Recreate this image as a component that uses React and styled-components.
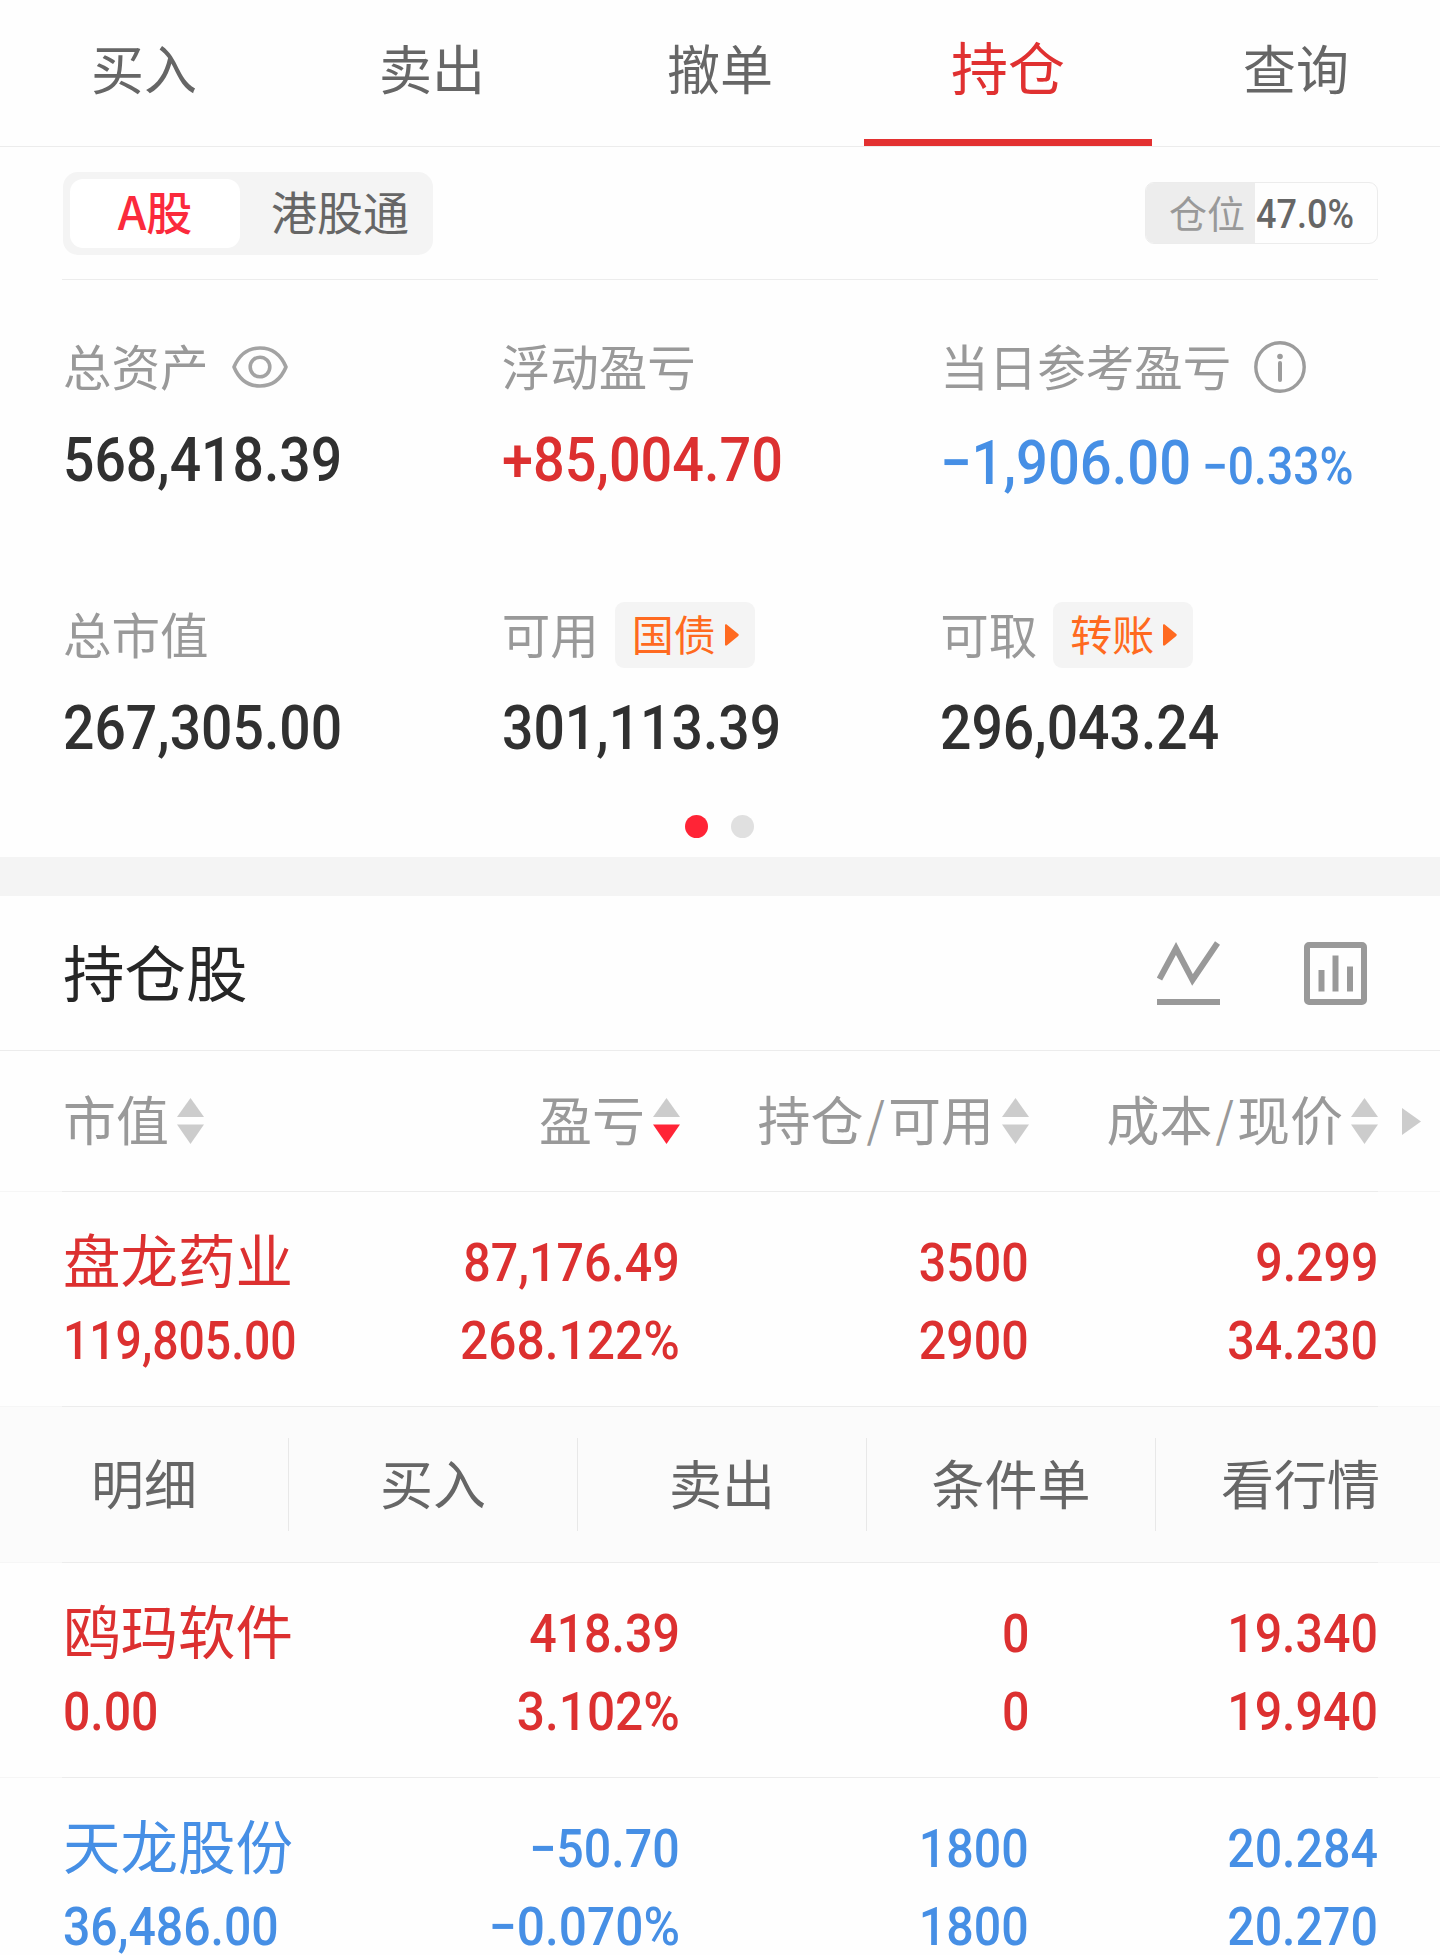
import React from "react";
import styled, {createGlobalStyle} from "styled-components";

const RED = "#dc3030";
const BLUE = "#468fe5";
const GREY = "#999999";

const GlobalStyle = createGlobalStyle`
  * {
    box-sizing: border-box;
  }

  body {
    margin: 0;
    background: #fefefe;
    font-family: "Noto Sans CJK SC", "Noto Sans", sans-serif;
  }
`

const Page = styled.div`
  width: 1440px;
  height: 1955px;
  overflow: hidden;
  display: flex;
  flex-direction: column;
`

// The digits use a narrow face, so Roboto is squeezed horizontally
const Num = styled.div`
  font-family: Roboto, "Noto Sans CJK SC", sans-serif;
  font-weight: 500;
  font-size: ${p => p.$size}px;
  line-height: ${p => p.$line}px;
  color: ${p => p.$color};
  width: max-content;
  white-space: nowrap;
  transform: scaleX(${p => p.$squeeze || 0.9});
  transform-origin: ${p => p.$right ? "right" : "left"} center;
`

const TabBar = styled.div`
  display: flex;
  height: 147px;
  flex-shrink: 0;
  border-bottom: 1px solid #ececec;
`

const Tab = styled.div`
  flex: 1;
  text-align: center;
  padding-top: ${p => p.$active ? 1 : 3}px;
  line-height: 128px;
  font-size: ${p => p.$active ? 57 : 53}px;
  color: ${p => p.$active ? "#e03131" : "#666666"};
  border-bottom: 7px solid ${p => p.$active ? "#e33131" : "transparent"};
`

const AccountBar = styled.div`
  display: flex;
  align-items: center;
  justify-content: space-between;
  height: 133px;
  flex-shrink: 0;
  margin: 0 62px;
  border-bottom: 1px solid #ececec;
`

const Segment = styled.div`
  display: flex;
  width: 370px;
  height: 83px;
  padding: 7px;
  margin-left: 1px;
  border-radius: 15px;
  background: #f4f4f4;
`

const SegmentItem = styled.div`
  width: ${p => p.$active ? 170 : 200}px;
  flex-shrink: 0;
  border-radius: 13px;
  text-align: center;
  font-size: 46px;
  line-height: 63px;
  font-weight: ${p => p.$active ? 500 : 400};
  color: ${p => p.$active ? "#fb2a3c" : "#666666"};
  background: ${p => p.$active ? "#ffffff" : "transparent"};
`

const Position = styled.div`
  display: flex;
  width: 233px;
  height: 62px;
  border: 1px solid #ececec;
  border-radius: 9px;
  overflow: hidden;
`

const PositionLabel = styled.div`
  width: 109px;
  padding-left: 23px;
  font-size: 38px;
  line-height: 57px;
  color: ${GREY};
  background: #ededed;
  margin-right: 1px;
`

const Summary = styled.div`
  display: flex;
  flex-direction: column;
  align-items: center;
  height: 577px;
  flex-shrink: 0;
  padding: 54px 62px 0;
`

const Stats = styled.div`
  display: grid;
  width: 100%;
  grid-template-columns: repeat(3, minmax(0, 1fr));
  row-gap: 102px;
`

const StatLabel = styled.div`
  display: flex;
  align-items: center;
  height: 66px;
  margin-bottom: 20px;
`

const LabelText = styled.span`
  height: 66px;
  line-height: 62px;
  font-size: 48.5px;
  white-space: nowrap;
  padding-left: 1px;
  color: ${GREY};
`

const StatValue = styled.div`
  height: 80px;
  padding-top: ${p => p.$drop || 0}px;
  padding-left: 1px;
`

const Percent = styled.span`
  font-size: 51px;
  margin-left: 12px;
`

const Tag = styled.div`
  display: flex;
  align-items: center;
  height: 66px;
  width: 140px;
  margin-left: 16px;
  padding-left: 17px;
  border-radius: 9px;
  background: #f4f4f4;
`

const TagText = styled.span`
  height: 66px;
  width: 93px;
  line-height: 62px;
  font-size: 42px;
  color: #ff6a20;
`

const Dots = styled.div`
  display: flex;
  gap: 23px;
  margin-top: 47px;
  margin-right: 1px;
`

const Dot = styled.div`
  width: 23px;
  height: 23px;
  border-radius: 50%;
  background: ${p => p.$active ? "#ff2436" : "#e0e0e0"};
`

const Band = styled.div`
  height: 39px;
  flex-shrink: 0;
  background: #f4f4f4;
`

const SectionHead = styled.div`
  display: flex;
  align-items: center;
  height: 155px;
  flex-shrink: 0;
  padding: 0 73px 0 63px;
  border-bottom: 1px solid #ececec;
`

const SectionTitle = styled.div`
  flex: 1;
  font-size: 61.5px;
  line-height: 90px;
  padding-bottom: 4px;
  color: #262626;
`

const HeadIcon = styled.svg`
  width: 63px;
  height: 64px;
  margin-left: 84px;
`

const Grid = styled.div`
  display: grid;
  grid-template-columns: 269px 349px 349px 349px 62px;
  padding-left: 62px;
  flex-shrink: 0;
`

const TableHead = styled(Grid)`
  height: 140px;
  align-items: center;
`

const HeadCell = styled.div`
  display: flex;
  align-items: center;
  justify-content: ${p => p.$left ? "flex-start" : "flex-end"};
  padding-left: ${p => p.$left ? 1 : 0}px;
  white-space: nowrap;
`

const HeadText = styled.span`
  font-size: 53px;
  line-height: 80px;
  padding-bottom: 6px;
  color: ${GREY};
`

const Slash = styled.span`
  font-size: 47px;
  line-height: 0;
  vertical-align: 4px;
  padding: 0 3px;
`

const ArrowCell = styled.div`
  padding-left: 24px;
  line-height: 0;
`

const Row = styled(Grid)`
  height: 214px;
  padding-top: 32px;
`

const Cell = styled.div`
  display: flex;
  flex-direction: column;
  align-items: ${p => p.$left ? "flex-start" : "flex-end"};
  padding-left: ${p => p.$left ? 1 : 0}px;
`

const StockName = styled.div`
  height: 78px;
  font-size: 57.5px;
  line-height: 68px;
  white-space: nowrap;
  color: ${p => p.$color};
`

// Slightly lighter at both page margins
const Line = styled.div`
  height: 1px;
  flex-shrink: 0;
  background: linear-gradient(#ececec, #ececec) 62px 0 / 1316px 1px no-repeat, #f6f6f6;
`

const Actions = styled.div`
  display: flex;
  align-items: center;
  height: 155px;
  flex-shrink: 0;
  background: #fbfbfb;
`

const Action = styled.div`
  width: 289px;
  height: 93px;
  flex-shrink: 0;
  text-align: center;
  font-size: 53px;
  line-height: 89px;
  color: #666666;
  border-right: 1px solid #e8e8e8;

  &:last-child {
    border-right: none;
  }
`

const LabelIcon = styled.svg`
  flex-shrink: 0;
  margin-left: 23px;
`

const SortArrows = styled.svg`
  flex-shrink: 0;
  margin-left: 8px;
`

const EyeIcon = () => (
    <LabelIcon width="56" height="42" viewBox="0 0 56 42" fill="none" stroke="#a3a3a3" strokeWidth="3.6">
        <path d="M2 21C7 9 16 2 28 2s21 7 26 19c-5 12-14 19-26 19S7 33 2 21z" strokeLinejoin="round"/>
        <circle cx="28" cy="21" r="9.8"/>
    </LabelIcon>
)

const InfoIcon = () => (
    <LabelIcon width="52" height="52" viewBox="0 0 52 52" fill="none" stroke="#9c9c9c">
        <circle cx="26" cy="26" r="24.2" strokeWidth="3.4"/>
        <path d="M26 22v17" strokeWidth="4" strokeLinecap="round"/>
        <circle cx="26" cy="15.5" r="2.8" fill="#9c9c9c" stroke="none"/>
    </LabelIcon>
)

const TagArrow = () => (
    <svg width="14" height="22" viewBox="0 0 14 22" fill="#ff6a20">
        <path d="M0 1.5C0 .3 1 0 2 .8L13 9.8c1 .8 1 1.6 0 2.4L2 21.2C1 22 0 21.7 0 20.5z"/>
    </svg>
)

const SortIcon = ({active}) => (
    <SortArrows width="27" height="46" viewBox="0 0 27 46">
        <path d="M13.5 0L27 19H0z" fill="#cccccc"/>
        <path d="M13.5 46L27 26.500H0z" fill={active ? "#ff2436" : "#cccccc"}/>
    </SortArrows>
)

const tabs = ["买入", "卖出", "撤单", "持仓", "查询"];
const actions = ["明细", "买入", "卖出", "条件单", "看行情"];

const holdings = [
    {
        name: "盘龙药业", value: "119,805.00", color: RED, open: true, squeeze: 0.865,
        cols: [["87,176.49", "268.122%"], ["3500", "2900"], ["9.299", "34.230"]]
    },
    {
        name: "鸥玛软件", value: "0.00", color: RED,
        cols: [["418.39", "3.102%"], ["0", "0"], ["19.340", "19.940"]]
    },
    {
        name: "天龙股份", value: "36,486.00", color: BLUE,
        cols: [["−50.70", "−0.070%"], ["1800", "1800"], ["20.284", "20.270"]]
    }
];

const Stat = ({label, extra, drop, squeeze = 0.892, color = "#303030", children}) => (
    <div>
        <StatLabel>
            <LabelText>{label}</LabelText>
            {extra}
        </StatLabel>
        <StatValue $drop={drop}>
            <Num $size={62} $line={80} $squeeze={squeeze} $color={color}>{children}</Num>
        </StatValue>
    </div>
)

const Holding = ({stock}) => (
    <>
        <Row>
            <Cell $left>
                <StockName $color={stock.color}>{stock.name}</StockName>
                <Num $size={53.5} $line={78} $squeeze={stock.squeeze} $color={stock.color}>{stock.value}</Num>
            </Cell>
            {stock.cols.map((col, i) => (
                <Cell key={i}>
                    {col.map((text, j) => (
                        <Num
                            key={j}
                            $right
                            $size={53.5}
                            $line={78}
                            $squeeze={text.endsWith("%") ? 0.928 : 0.903}
                            $color={stock.color}
                        >
                            {text}
                        </Num>
                    ))}
                </Cell>
            ))}
        </Row>
        <Line/>
        {stock.open && (
            <>
                <Actions>
                    {actions.map(name => <Action key={name}>{name}</Action>)}
                </Actions>
                <Line/>
            </>
        )}
    </>
)

const App = () => {
    const [tab, setTab] = React.useState("持仓");

    return (
        <Page>
            <GlobalStyle/>
            <TabBar>
                {tabs.map(name => (
                    <Tab key={name} $active={name === tab} onClick={() => setTab(name)}>{name}</Tab>
                ))}
            </TabBar>

            <AccountBar>
                <Segment>
                    <SegmentItem $active>A股</SegmentItem>
                    <SegmentItem>港股通</SegmentItem>
                </Segment>
                <Position>
                    <PositionLabel>仓位</PositionLabel>
                    <Num $size={40} $line={64} $color="#666666">47.0%</Num>
                </Position>
            </AccountBar>

            <Summary>
                <Stats>
                    <Stat label="总资产" extra={<EyeIcon/>}>568,418.39</Stat>
                    <Stat label="浮动盈亏" color={RED} squeeze={0.9}>+85,004.70</Stat>
                    <Stat label="当日参考盈亏" extra={<InfoIcon/>} color={BLUE} drop={3} squeeze={0.905}>
                        −1,906.00<Percent>−0.33%</Percent>
                    </Stat>
                    <Stat label="总市值">267,305.00</Stat>
                    <Stat label="可用" extra={<Tag><TagText>国债</TagText><TagArrow/></Tag>}>301,113.39</Stat>
                    <Stat label="可取" extra={<Tag><TagText>转账</TagText><TagArrow/></Tag>}>296,043.24</Stat>
                </Stats>
                <Dots>
                    <Dot $active/>
                    <Dot/>
                </Dots>
            </Summary>

            <Band/>

            <SectionHead>
                <SectionTitle>持仓股</SectionTitle>
                <HeadIcon viewBox="0 0 63 64" fill="none" stroke={GREY} strokeWidth="6">
                    <path d="M2.500 38L19 7.500 35.500 39 60.500 2"/>
                    <path d="M0 61h63"/>
                </HeadIcon>
                <HeadIcon viewBox="0 0 63 64" fill="none" stroke={GREY} strokeWidth="6">
                    <rect x="3" y="4" width="57" height="57" rx="2"/>
                    <path d="M17.500 29v21.500M31.500 14.500v36M46 25.500v25"/>
                </HeadIcon>
            </SectionHead>

            <TableHead>
                <HeadCell $left><HeadText>市值</HeadText><SortIcon/></HeadCell>
                <HeadCell><HeadText>盈亏</HeadText><SortIcon active/></HeadCell>
                <HeadCell><HeadText>持仓<Slash>/</Slash>可用</HeadText><SortIcon/></HeadCell>
                <HeadCell><HeadText>成本<Slash>/</Slash>现价</HeadText><SortIcon/></HeadCell>
                <ArrowCell>
                    <svg width="19" height="27" viewBox="0 0 19 27">
                        <path d="M0 0l19 13.500L0 27z" fill="#cccccc"/>
                    </svg>
                </ArrowCell>
            </TableHead>
            <Line/>

            {holdings.map(stock => <Holding key={stock.name} stock={stock}/>)}
        </Page>
    );
}

export default App;
